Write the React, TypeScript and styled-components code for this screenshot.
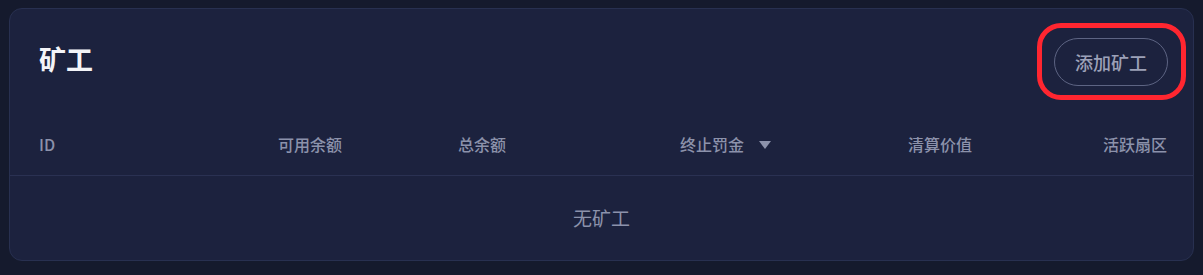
import React from "react";
import styled, { createGlobalStyle } from "styled-components";

const GlobalStyle = createGlobalStyle`
  html, body {
    margin: 0;
    padding: 0;
    background: #151a2d;
    font-family: "Noto Sans CJK SC", "Noto Sans", sans-serif;
  }
`;

const Page = styled.div`
  padding: 8px 9px 13px 9px;
  background: #151a2d;
  min-height: 275px;
  box-sizing: border-box;
`;

const Card = styled.section`
  background: #1c223e;
  border: 1px solid #283050;
  border-radius: 13px;
`;

const TitleBar = styled.div`
  display: flex;
  align-items: center;
  justify-content: space-between;
  padding: 29px 25px 0 29px;
`;

const Title = styled.h2`
  margin: -6px 0 0 0;
  font-size: 27px;
  font-weight: 700;
  color: #f3f4f8;
  line-height: 34px;
`;

const ButtonWrap = styled.div`
  position: relative;
`;

const AddButton = styled.button`
  height: 48px;
  width: 114px;
  border-radius: 24px;
  border: 1.5px solid #5d6483;
  background: transparent;
  color: #9ca1b8;
  font-family: inherit;
  font-size: 18px;
  font-weight: 500;
  cursor: pointer;
  padding: 0;
`;

const Highlight = styled.span`
  position: absolute;
  top: -15px;
  left: -17px;
  right: -18px;
  bottom: -14px;
  border: 5px solid #ff2630;
  border-radius: 24px;
  pointer-events: none;
`;

const HeadRow = styled.div`
  display: grid;
  grid-template-columns: 239px 180px 222px 228px 189px 1fr;
  margin-top: 30px;
  padding: 17px 26px 20px 29px;
  border-bottom: 1px solid #2a3152;
`;

const HeadCell = styled.div<{ $align?: string }>`
  display: flex;
  align-items: center;
  gap: 15px;
  font-size: 16px;
  font-weight: 500;
  line-height: 22px;
  color: #8c92ab;
  justify-content: ${({ $align }) => $align || "flex-start"};
`;

const Caret = styled.span`
  width: 0;
  height: 0;
  border-left: 6px solid transparent;
  border-right: 6px solid transparent;
  border-top: 8px solid #8c92ab;
  margin-top: 1px;
`;

const Empty = styled.div`
  height: 84px;
  display: flex;
  align-items: center;
  justify-content: center;
  font-size: 19px;
  color: #8c92ab;
  padding-bottom: 2px;
  box-sizing: border-box;
`;

const columns = [
  { label: "ID" },
  { label: "可用余额" },
  { label: "总余额" },
  { label: "终止罚金", sort: true },
  { label: "清算价值" },
  { label: "活跃扇区", align: "flex-end" },
];

const App: React.FC = () => (
  <>
    <GlobalStyle />
    <Page>
      <Card>
        <TitleBar>
          <Title>矿工</Title>
          <ButtonWrap>
            <AddButton>添加矿工</AddButton>
            <Highlight />
          </ButtonWrap>
        </TitleBar>
        <HeadRow>
          {columns.map((c) => (
            <HeadCell key={c.label} $align={c.align}>
              {c.label}
              {c.sort && <Caret />}
            </HeadCell>
          ))}
        </HeadRow>
        <Empty>无矿工</Empty>
      </Card>
    </Page>
  </>
);

export default App;
